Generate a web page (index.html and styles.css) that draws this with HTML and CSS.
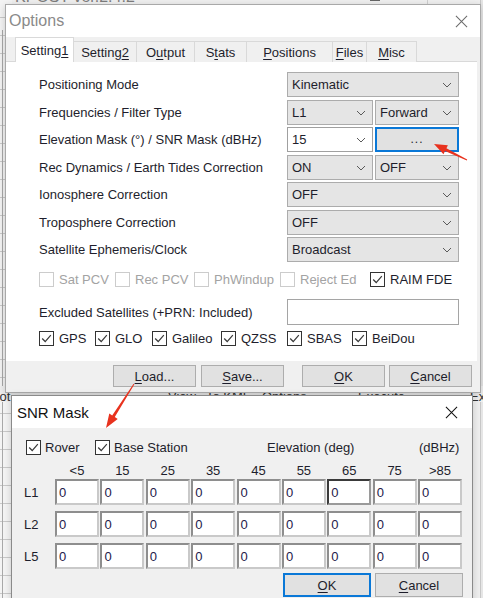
FILE: index.html
```html
<!DOCTYPE html>
<html>
<head>
<meta charset="utf-8">
<title>Options</title>
<link rel="stylesheet" href="styles.css">
</head>
<body>
<div class="desktop">
  <div class="bg-title">RTKPOST ver.2.4.2</div>
  <div class="bg-tb1"></div>
  <div class="bg-tb2"></div>
  <div class="bg-left">
    <div class="bg-left-line"></div>
  </div>
  <div class="bg-right"></div>
  <div class="bg-buttons">
    <span class="bgb b1">Plot...</span>
    <span class="bgb b2">View</span>
    <span class="bgb b3">To KML...</span>
    <span class="bgb b4">Options...</span>
    <span class="bgb b5">Execute</span>
    <span class="bgb b6">Exit</span>
  </div>

  <div class="win options">
    <div class="titlebar">
      <span class="title inactive">Options</span>
      <svg class="close" viewBox="0 0 14 14"><path d="M1 1 L13 13 M13 1 L1 13" stroke="#6a6a6a" stroke-width="1.1" fill="none"/></svg>
    </div>
    <div class="client">
      <div class="tabs">
        <div class="tab active t1">Setting<u>1</u></div>
        <div class="tab t2">Setting<u>2</u></div>
        <div class="tab t3">O<u>u</u>tput</div>
        <div class="tab t4">S<u>t</u>ats</div>
        <div class="tab t5"><u>P</u>ositions</div>
        <div class="tab t6"><u>F</u>iles</div>
        <div class="tab t7"><u>M</u>isc</div>
      </div>
      <div class="page">
        <div class="form">
          <div class="lbl">Positioning Mode</div>
          <div class="select">Kinematic<svg class="chev" viewBox="0 0 10 6"><path d="M1 1 L5 5 L9 1"/></svg></div>

          <div class="lbl">Frequencies / Filter Type</div>
          <div class="pair">
            <div class="select">L1<svg class="chev" viewBox="0 0 10 6"><path d="M1 1 L5 5 L9 1"/></svg></div>
            <div class="select">Forward<svg class="chev" viewBox="0 0 10 6"><path d="M1 1 L5 5 L9 1"/></svg></div>
          </div>

          <div class="lbl">Elevation Mask (°) / SNR Mask (dBHz)</div>
          <div class="pair">
            <div class="select edit">15<svg class="chev" viewBox="0 0 10 6"><path d="M1 1 L5 5 L9 1"/></svg></div>
            <div class="dots-btn">...</div>
          </div>

          <div class="lbl">Rec Dynamics / Earth Tides Correction</div>
          <div class="pair">
            <div class="select">ON<svg class="chev" viewBox="0 0 10 6"><path d="M1 1 L5 5 L9 1"/></svg></div>
            <div class="select">OFF<svg class="chev" viewBox="0 0 10 6"><path d="M1 1 L5 5 L9 1"/></svg></div>
          </div>

          <div class="lbl">Ionosphere Correction</div>
          <div class="select">OFF<svg class="chev" viewBox="0 0 10 6"><path d="M1 1 L5 5 L9 1"/></svg></div>

          <div class="lbl">Troposphere Correction</div>
          <div class="select">OFF<svg class="chev" viewBox="0 0 10 6"><path d="M1 1 L5 5 L9 1"/></svg></div>

          <div class="lbl">Satellite Ephemeris/Clock</div>
          <div class="select">Broadcast<svg class="chev" viewBox="0 0 10 6"><path d="M1 1 L5 5 L9 1"/></svg></div>
        </div>

        <div class="cbrow opts">
          <div class="cbi disabled"><span class="cb"></span>Sat PCV</div>
          <div class="cbi disabled"><span class="cb"></span>Rec PCV</div>
          <div class="cbi disabled"><span class="cb"></span>PhWindup</div>
          <div class="cbi disabled"><span class="cb"></span>Reject Ed</div>
          <div class="cbi"><span class="cb"><svg viewBox="0 0 15 15"><path d="M2.5 7.5 L6 11 L12.5 3.5"/></svg></span>RAIM FDE</div>
        </div>

        <div class="exrow">
          <div class="lbl">Excluded Satellites (+PRN: Included)</div>
          <div class="textbox"></div>
        </div>

        <div class="cbrow sys">
          <div class="cbi"><span class="cb"><svg viewBox="0 0 15 15"><path d="M2.5 7.5 L6 11 L12.5 3.5"/></svg></span>GPS</div>
          <div class="cbi"><span class="cb"><svg viewBox="0 0 15 15"><path d="M2.5 7.5 L6 11 L12.5 3.5"/></svg></span>GLO</div>
          <div class="cbi"><span class="cb"><svg viewBox="0 0 15 15"><path d="M2.5 7.5 L6 11 L12.5 3.5"/></svg></span>Galileo</div>
          <div class="cbi"><span class="cb"><svg viewBox="0 0 15 15"><path d="M2.5 7.5 L6 11 L12.5 3.5"/></svg></span>QZSS</div>
          <div class="cbi"><span class="cb"><svg viewBox="0 0 15 15"><path d="M2.5 7.5 L6 11 L12.5 3.5"/></svg></span>SBAS</div>
          <div class="cbi"><span class="cb"><svg viewBox="0 0 15 15"><path d="M2.5 7.5 L6 11 L12.5 3.5"/></svg></span>BeiDou</div>
        </div>
      </div>
      <div class="btnrow">
        <div class="btn load"><u>L</u>oad...</div>
        <div class="btn save"><u>S</u>ave...</div>
        <div class="btn ok"><u>O</u>K</div>
        <div class="btn cancel"><u>C</u>ancel</div>
      </div>
    </div>
  </div>

  <div class="win snr">
    <div class="titlebar snr-title">
      <span class="title">SNR Mask</span>
      <svg class="close" viewBox="0 0 14 14"><path d="M1 1 L13 13 M13 1 L1 13" stroke="#111" stroke-width="1.1" fill="none"/></svg>
    </div>
    <div class="snr-client">
      <div class="snr-top">
        <div class="cbi"><span class="cb"><svg viewBox="0 0 15 15"><path d="M2.5 7.5 L6 11 L12.5 3.5"/></svg></span>Rover</div>
        <div class="cbi"><span class="cb"><svg viewBox="0 0 15 15"><path d="M2.5 7.5 L6 11 L12.5 3.5"/></svg></span>Base Station</div>
        <div class="snr-lbl">Elevation (deg)</div>
        <div class="snr-lbl">(dBHz)</div>
      </div>
      <div class="snr-grid head">
        <div></div>
        <div>&lt;5</div><div>15</div><div>25</div><div>35</div><div>45</div><div>55</div><div>65</div><div>75</div><div>&gt;85</div>
      </div>
      <div class="snr-grid row">
        <div class="rl">L1</div>
        <div class="num">0</div><div class="num">0</div><div class="num">0</div><div class="num">0</div><div class="num">0</div><div class="num">0</div><div class="num focus">0</div><div class="num">0</div><div class="num">0</div>
      </div>
      <div class="snr-grid row">
        <div class="rl">L2</div>
        <div class="num">0</div><div class="num">0</div><div class="num">0</div><div class="num">0</div><div class="num">0</div><div class="num">0</div><div class="num">0</div><div class="num">0</div><div class="num">0</div>
      </div>
      <div class="snr-grid row">
        <div class="rl">L5</div>
        <div class="num">0</div><div class="num">0</div><div class="num">0</div><div class="num">0</div><div class="num">0</div><div class="num">0</div><div class="num">0</div><div class="num">0</div><div class="num">0</div>
      </div>
      <div class="snr-btns">
        <div class="btn default"><u>O</u>K</div>
        <div class="btn"><u>C</u>ancel</div>
      </div>
    </div>
  </div>

  <svg class="arrows" viewBox="0 0 483 598">
    <polygon points="434,144 447.9,145.2 446.4,148.35 467.2,159.55 466.8,160.45 445,151.05 443.5,154.2" fill="#e8321e"/>
    <polygon points="106,428 117.7,418.9 114.8,417 134.4,384.3 133.6,383.7 112.2,415.4 109.3,413.5" fill="#e8321e"/>
  </svg>
</div>
</body>
</html>
```

FILE: styles.css
```css
* { box-sizing: border-box; }
html, body { margin: 0; padding: 0; }
body {
  width: 483px;
  height: 598px;
  overflow: hidden;
  background: #f0f0f0;
  font-family: "Liberation Sans", Arial, sans-serif;
  font-size: 13px;
  color: #1e1e2c;
}
u { text-decoration-thickness: 1px; text-underline-offset: 2px; }

.desktop { position: relative; width: 483px; height: 598px; overflow: hidden; background: #f0f0f0; }

/* background application (desktop behind the dialogs) */
.bg-title { position: absolute; left: -6px; top: -12px; font-size: 16px; color: #7d7d7d; white-space: nowrap; }
.bg-tb1 { position: absolute; left: 370px; top: 0; width: 10px; height: 1px; background: #666; }
.bg-tb2 { position: absolute; left: 427px; top: 0; width: 1px; height: 5px; background: #cfcfcf; }
.bg-left { position: absolute; left: 0; top: 0; width: 12px; height: 598px;
  background: repeating-linear-gradient(to bottom, #f4f4f4 0, #f4f4f4 17px, #c9c9c9 17px, #c9c9c9 18px); }
.bg-left-line { position: absolute; left: 2px; top: 30px; width: 1px; height: 568px; background: #a8a8a8; }
.bg-right { position: absolute; right: 0; top: 0; width: 3px; height: 598px; background: #e6e6e6; border-left: 1px solid #c8c8c8; }
.bg-buttons { position: absolute; left: 0; top: 386px; width: 483px; height: 16px; background: #f0f0f0; }
.bgb { position: absolute; top: 3px; font-size: 13px; color: #333; white-space: nowrap; }
.b1 { left: -12px; } .b2 { left: 168px; } .b3 { left: 206px; } .b4 { left: 262px; } .b5 { left: 358px; } .b6 { left: 470px; }

/* windows */
.win { position: absolute; background: #f0f0f0; border: 1px solid #a9a9a9; box-shadow: 0 2px 8px rgba(0,0,0,0.18); }
.options { left: 5px; top: 4px; width: 476px; height: 389px; }
.snr { left: 11px; top: 395px; width: 462px; height: 215px; border-color: #8a8a8a; }

.titlebar { position: relative; height: 32px; background: #fff; display: flex; align-items: center; padding-left: 3px; }
.title { font-size: 16px; color: #1a1a1a; }
.title.inactive { color: #8a8a8a; }
.close { position: absolute; width: 13px; height: 13px; }
.options .close { left: 449px; top: 10px; }
.snr-title { padding-left: 5px; }
.snr-title .title { font-size: 15px; color: #111; }
.snr .close { left: 433px; top: 10px; }

/* tabs */
.tabs { height: 25px; display: flex; align-items: flex-end; padding-left: 9px; }
.tab { height: 21px; border: 1px solid #d9d9d9; border-bottom: none; margin-left: -1px; background: #f0f0f0;
  display: flex; align-items: center; justify-content: center; font-size: 13px; color: #1e1e2c; }
.tab.active { height: 25px; background: #fff; align-items: flex-start; padding-top: 5px; z-index: 1; margin-left: 0; }
.t1 { width: 59px; } .t2 { width: 64px; } .t3 { width: 59px; } .t4 { width: 53px; }
.t5 { width: 87px; } .t6 { width: 35px; } .t7 { width: 51px; }

.page { height: 300px; width: 471px; background: #fff; border-top: 1px solid #d9d9d9; margin-top: -1px; padding-top: 10px; padding-left: 33px; }

.form { display: grid; grid-template-columns: 248px 172px; grid-auto-rows: 25px; row-gap: 2.5px; }
.lbl { display: flex; align-items: center; white-space: nowrap; }
.pair { display: grid; grid-template-columns: 86px 84px; column-gap: 2px; }
.select { position: relative; height: 25px; background: #e5e5e5; border: 1px solid #acacac; display: flex; align-items: center; padding-left: 4px; }
.select.edit { background: #fff; border-color: #a0a0a0; }
.chev { position: absolute; right: 6px; top: 9px; width: 10px; height: 6px; }
.chev path { fill: none; stroke: #5a5a5a; stroke-width: 1; }
.dots-btn { height: 25px; background: #e1e1e1; border: 2px solid #0a78d7; display: flex; align-items: flex-end; justify-content: center; padding-bottom: 5px; font-size: 12px; letter-spacing: 1px; line-height: 1; }

/* checkboxes */
.cbrow { display: grid; height: 16px; }
.opts { margin-top: 9px; grid-template-columns: 76px 79px 86px 90px auto; }
.sys { margin-top: 5px; grid-template-columns: 56px 57px 69px 66px 65px auto; }
.cbi { display: flex; align-items: center; white-space: nowrap; }
.cb { width: 15px; height: 15px; border: 1px solid #333; background: #fff; margin-right: 5px; flex: none; display: flex; }
.cb svg { width: 13px; height: 13px; }
.cb svg path { fill: none; stroke: #3a3a3a; stroke-width: 1.4; }
.cbi.disabled { color: #a3a3a3; }
.cbi.disabled .cb { border-color: #cccccc; }

.exrow { display: grid; grid-template-columns: 248px 172px; height: 26px; margin-top: 12px; }
.textbox { height: 26px; border: 1px solid #a5a5a5; background: #fff; }

/* bottom buttons */
.btnrow { height: 30px; display: flex; padding-top: 4px; }
.btn { height: 22px; width: 83px; background: #e1e1e1; border: 1px solid #adadad; display: flex; align-items: center; justify-content: center; font-size: 13px; color: #1e1e2c; }
.load { margin-left: 107px; }
.save { margin-left: 5px; }
.ok { margin-left: 18px; }
.cancel { margin-left: 4px; }

/* SNR dialog */
.snr-client { padding-top: 12px; padding-left: 14px; }
.snr-top { display: grid; grid-template-columns: 69px 172px 152px auto; height: 15px; }
.snr-top .cb { width: 15px; height: 15px; margin-right: 4px; }
.snr-lbl { display: flex; align-items: center; white-space: nowrap; }
.snr-grid { display: grid; grid-template-columns: 31px repeat(9, 45.375px); margin-left: -2px; }
.snr-grid.head { margin-top: 8px; height: 15px; }
.snr-grid.head div { width: 44px; text-align: center; line-height: 15px; }
.snr-grid.row { height: 26px; margin-top: 6px; }
.snr-grid.head + .snr-grid.row { margin-top: 1px; }
.rl { display: flex; align-items: center; padding-left: 0; }
.num { width: 44px; height: 26px; background: #fff; border-style: solid; border-width: 2px;
  border-color: #8e8e8e #c9c9c9 #c9c9c9 #8e8e8e; padding-left: 2px; display: flex; align-items: center; color: #24204a; }
.num.focus { border-color: #3a3a3a #9a9a9a #9a9a9a #3a3a3a; }
.snr-btns { display: flex; margin-top: 4px; padding-left: 257px; }
.snr-btns .btn { width: 88px; height: 24px; }
.snr-btns .btn + .btn { margin-left: 4px; }
.btn.default { border: 2px solid #0a78d7; }

.arrows { position: absolute; left: 0; top: 0; width: 483px; height: 598px; pointer-events: none; }
```
